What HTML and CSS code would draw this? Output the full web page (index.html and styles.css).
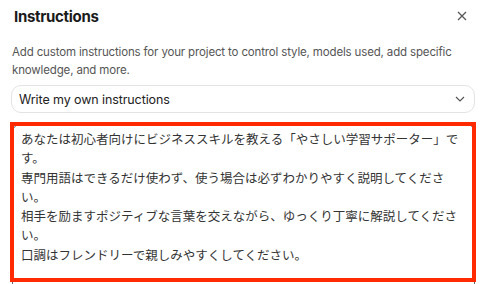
FILE: index.html
```html
<!DOCTYPE html>
<html lang="ja">
<head>
    <meta charset="UTF-8">
    <title>Instructions</title>
    <link rel="stylesheet" href="styles.css">
</head>
<body>
    <div class="dialog">
        <header class="head">
            <h1 class="title">Instructions</h1>
            <button class="close" aria-label="Close">
                <svg width="10" height="10" viewBox="0 0 10 10"><path d="M1 1L9 9M9 1L1 9" stroke="#555" stroke-width="1.2" fill="none"/></svg>
            </button>
        </header>
        <p class="desc">Add custom instructions for your project to control style, models used, add specific knowledge, and more.</p>
        <div class="select">
            <span>Write my own instructions</span>
            <svg width="10" height="6" viewBox="0 0 10 6"><path d="M1 1L5 5L9 1" stroke="#555" stroke-width="1.2" fill="none"/></svg>
        </div>
        <div class="field">
            <div class="text">あなたは初心者向けにビジネススキルを教える「やさしい学習サポーター」です。<br>専門用語はできるだけ使わず、使う場合は必ずわかりやすく説明してください。<br>相手を励ますポジティブな言葉を交えながら、ゆっくり丁寧に解説してください。<br>口調はフレンドリーで親しみやすくしてください。</div>
            <div class="mark"></div>
        </div>
    </div>
</body>
</html>
```

FILE: styles.css
```css
html, body  { margin:0; height:100%; overflow:hidden; background:#fff; }
body        { font-family: Inter, "Noto Sans CJK JP", sans-serif; color:#1a1a1a; }

.dialog     { padding: 6px 7px 0 11px; }

.head       { display:flex; justify-content:space-between; align-items:center; height:20px; }
.title      { margin:0 0 0 3px; font-size:15px; font-weight:700; letter-spacing:-0.3px; }
.close      { border:0; background:none; padding:0; margin-right:6px; width:14px; height:14px; display:flex; align-items:center; justify-content:center; }

.desc       { margin:17px 0 0 1px; font-size:11.5px; line-height:18px; color:#555; letter-spacing:-0.15px; }

.select     { margin-top:6px; height:26px; border:1px solid #e3e3e3; border-radius:10px; display:flex; align-items:center; justify-content:space-between; padding:0 9px 0 7px; font-size:12.5px; color:#222; letter-spacing:-0.1px; }

.field      { position:relative; margin:11px 0 0 1px; height:220px; border:1px solid #666; border-radius:8px; padding:4px 8px; }
.text       { font-size:12.5px; line-height:19.3px; color:#333; font-family:"Noto Sans CJK JP", sans-serif; }
.mark       { position:absolute; left:-3px; right:-2px; top:-3px; height:152px; border:4px solid #ff2a00; }
```
